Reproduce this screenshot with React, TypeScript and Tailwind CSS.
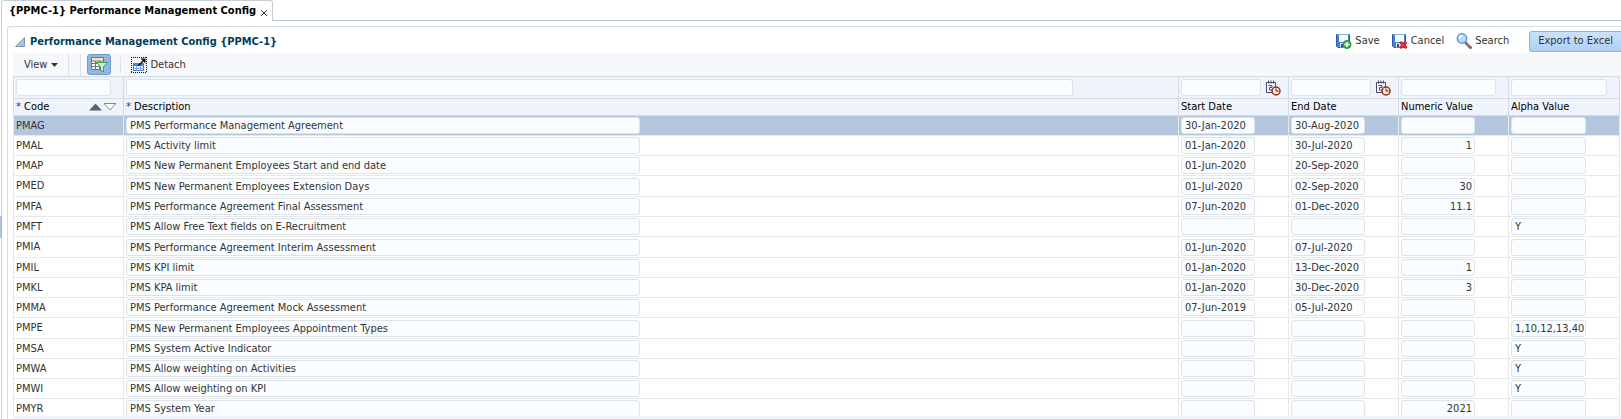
import { useState, type ReactNode } from 'react';

interface ConfigRow {
  code:        string;
  description: string;
  start?:      string;
  end?:        string;
  numeric?:    string;
  alpha?:      string;
}

const ROWS: ConfigRow[] = [
  { code: 'PMAG', description: 'PMS Performance Management Agreement', start: '30-Jan-2020', end: '30-Aug-2020' },
  { code: 'PMAL', description: 'PMS Activity limit', start: '01-Jan-2020', end: '30-Jul-2020', numeric: '1' },
  { code: 'PMAP', description: 'PMS New Permanent Employees Start and end date', start: '01-Jun-2020', end: '20-Sep-2020' },
  { code: 'PMED', description: 'PMS New Permanent Employees Extension Days', start: '01-Jul-2020', end: '02-Sep-2020', numeric: '30' },
  { code: 'PMFA', description: 'PMS Performance Agreement Final Assessment', start: '07-Jun-2020', end: '01-Dec-2020', numeric: '11.1' },
  { code: 'PMFT', description: 'PMS Allow Free Text fields on E-Recruitment', alpha: 'Y' },
  { code: 'PMIA', description: 'PMS Performance Agreement Interim Assessment', start: '01-Jun-2020', end: '07-Jul-2020' },
  { code: 'PMIL', description: 'PMS KPI limit', start: '01-Jan-2020', end: '13-Dec-2020', numeric: '1' },
  { code: 'PMKL', description: 'PMS KPA limit', start: '01-Jan-2020', end: '30-Dec-2020', numeric: '3' },
  { code: 'PMMA', description: 'PMS Performance Agreement Mock Assessment', start: '07-Jun-2019', end: '05-Jul-2020' },
  { code: 'PMPE', description: 'PMS New Permanent Employees Appointment Types', alpha: '1,10,12,13,40' },
  { code: 'PMSA', description: 'PMS System Active Indicator', alpha: 'Y' },
  { code: 'PMWA', description: 'PMS Allow weighting on Activities', alpha: 'Y' },
  { code: 'PMWI', description: 'PMS Allow weighting on KPI', alpha: 'Y' },
  { code: 'PMYR', description: 'PMS System Year', numeric: '2021' },
];

const FIELD = 'block rounded-[3px] border border-[#dde3e8] bg-[#fafdff] outline-none';

function DiskIcon({ children }: { children: ReactNode }) {
  return (
    <svg width="16" height="16" viewBox="0 0 16 16">
      <path d="M.5 1.500h13v13H2L.5 13z" fill="#4a7fd0" stroke="#2c5cae" />
      <path d="M3 2h9v7H3z" fill="#f6f9fe" />
      <path d="M1 1.500h12" stroke="#8fb2e6" />
      <path d="M4 10h7v4.500H4z" fill="#e6ecf6" />
      <path d="M5 11h2v3.500H5z" fill="#3a4f7c" />
      {children}
    </svg>
  );
}

function SaveIcon() {
  return (
    <DiskIcon>
      <circle cx="11" cy="11.500" r="4" fill="#3cba4c" stroke="#1b9436" />
      <path d="M11 9v5M8.500 11.500h5" stroke="#fff" strokeWidth="1.500" />
    </DiskIcon>
  );
}

function CancelIcon() {
  return (
    <DiskIcon>
      <path d="M8 9l6.500 6M14.500 9L8 15" stroke="#d3222c" strokeWidth="3" />
      <path d="M9 10l4.500 4M13.500 10L9 14" stroke="#ee6a6e" strokeDasharray="1 1" />
    </DiskIcon>
  );
}

function SearchIcon() {
  return (
    <svg width="16" height="16" viewBox="0 0 16 16">
      <path d="M10 10l4.500 4.500" stroke="#7c6560" strokeWidth="3" strokeLinecap="round" />
      <path d="M10.500 9.500l4 4" stroke="#c6a497" />
      <circle cx="6" cy="5.500" r="4.700" fill="#b9dcf9" stroke="#5b93d8" strokeWidth="1.500" />
      <path d="M3.500 5.500a3 3 0 0 1 3-3" fill="none" stroke="#fff" strokeWidth="1.500" />
    </svg>
  );
}

function FilterIcon() {
  return (
    <svg width="18" height="17" viewBox="0 0 18 17">
      <path d="M1.500 1.500h12v12h-12z" fill="#fff" stroke="#6a6f92" />
      <path d="M2 2h11v2.500H2z" fill="#f9ec9a" />
      <path d="M1 5h13M1 7.500h12M1 10.500h8M5.500 5v9M9.500 5v9" stroke="#6a6f92" />
      <path d="M6.500 6.500h11l-4 4.500v5L10.500 14v-3z" fill="#c9f2cf" stroke="#3c9d58" />
    </svg>
  );
}

function DetachIcon() {
  return (
    <svg width="16" height="16" viewBox="0 0 16 16">
      <path d="M0 .500h16M.500 0v16M15.500 0v16M0 15.500h16" stroke="#111" strokeDasharray="1 1" />
      <path d="M2.500 6.500h10v7h-10z" fill="#fff" stroke="#3c6cc4" />
      <path d="M2 6h11v3H2z" fill="#4d84db" />
      <path d="M2 11.500h11M5.500 9v5M9.500 9v5" stroke="#7ba6e8" />
      <path d="M7 9L13 3" stroke="#111" strokeWidth="1.500" />
      <path d="M9.500 1.500h5v5z" fill="#111" />
    </svg>
  );
}

function CalendarIcon() {
  return (
    <svg width="16" height="16" viewBox="0 0 16 16">
      <path d="M1.500 2.500h9v10h-9z" fill="#f6f7fc" stroke="#45496e" />
      <path d="M3.500 .500v3M6 .500v3M8.500 .500v3" stroke="#45496e" />
      <path d="M3.500 5.500h3.500v2H4.500v2.500H7" fill="none" stroke="#45496e" />
      <circle cx="11" cy="11" r="4" fill="#fce6c8" stroke="#8e2f22" strokeWidth="1.500" />
      <path d="M11 8.500V11h2.500" fill="none" stroke="#4a2a20" />
    </svg>
  );
}

function SortArrows() {
  return (
    <svg width="28" height="8" viewBox="0 0 28 8">
      <path d="M0 7.500L6.500 0.500L13 7.500z" fill="#51657a" />
      <path d="M15 .5h12L21 7z" fill="#fff" stroke="#7e8c9a" />
    </svg>
  );
}

function ToolButton({ icon, label }: { icon: ReactNode; label: string }) {
  return (
    <button className="flex items-center gap-[3px]">
      {icon}
      {label}
    </button>
  );
}

function Separator() {
  return <span className="h-[22px] w-px bg-[#dce2ea]" />;
}

function FilterInput({ label, className }: { label: string; className: string }) {
  return <input aria-label={`Filter ${label}`} className={`${FIELD} h-[17px] ${className}`} />;
}

function CellInput({ label, value = '', className }: { label: string; value?: string; className: string }) {
  return <input aria-label={label} defaultValue={value} className={`${FIELD} ml-0.5 h-[17px] pl-[3px] ${className}`} />;
}

export default function App() {
  const [selected, setSelected] = useState('PMAG');

  return (
    <div className="relative flex h-screen flex-col overflow-hidden bg-white font-['DejaVu_Sans_Condensed','DejaVu_Sans',sans-serif] text-[11px] leading-4 text-[#333]">
      {/* Tab strip */}
      <div className="flex h-[21px] shrink-0">
        <div className="ml-px flex items-center gap-1 rounded-t-[3px] border border-b-0 border-[#c3ced9] pl-[7px] pr-1 font-bold text-black">
          {'{PPMC-1} Performance Management Config'}
          <button aria-label="Close tab" className="pt-1">
            <svg width="8" height="8" viewBox="0 0 8 8"><path d="M1 1l6 6M7 1L1 7" stroke="#333" /></svg>
          </button>
        </div>
        <div className="grow border-b border-[#b9c6d6]" />
      </div>

      {/* Splitter handle */}
      <div className="absolute left-0 top-[216px] h-[22px] w-0.5 bg-[#a9c3e6]" />

      <div className="ml-px flex min-h-0 grow flex-col border-l border-[#c9d4e0] pl-[5px] pt-[5px]">
        <div className="flex min-h-0 grow flex-col rounded-tl-[3px] border-l border-t border-[#d3dfe8]">
          {/* Panel header */}
          <div className="flex h-[26px] shrink-0 items-center justify-between pl-[7px]">
            <h1 className="flex items-center gap-[5px] pt-[3px] font-bold text-[#003d5b]">
              <svg width="10" height="10" viewBox="0 0 10 10"><path d="M9.500.5v9H.5z" fill="#a9c3de" stroke="#7d9cbc" /></svg>
              {'Performance Management Config {PPMC-1}'}
            </h1>
            <div className="flex items-center gap-3 pt-0.5">
              <ToolButton icon={<SaveIcon />} label="Save" />
              <ToolButton icon={<CancelIcon />} label="Cancel" />
              <ToolButton icon={<SearchIcon />} label="Search" />
              <button className="ml-2 h-[21px] rounded-l-[3px] border border-r-0 border-[#8fb4dc] bg-linear-to-b from-[#cbe1f9] to-[#aed0f4] px-2">
                Export to Excel
              </button>
            </div>
          </div>

          {/* Table toolbar */}
          <div className="ml-[5px] flex h-[23px] shrink-0 items-center bg-[#f7f8fc] pl-[11px]">
            <button className="mr-2.5 flex items-center gap-1">
              View
              <svg width="7" height="4" viewBox="0 0 7 4"><path d="M0 0h7L3.500 4z" fill="#333" /></svg>
            </button>
            <Separator />
            <span className="w-[11px]" />
            <Separator />
            <button aria-label="Query by example" className="ml-1.5 mr-[5px] flex h-[21px] w-6 items-center justify-center rounded-[3px] border border-[#6f9bcc] bg-[#92b7e0]">
              <FilterIcon />
            </button>
            <span className="ml-1 mr-2.5 h-4 w-px bg-[#dce2ea]" />
            <ToolButton icon={<DetachIcon />} label="Detach" />
          </div>

          <div className="ml-[5px] mr-px min-h-0 grow overflow-hidden">
            <table className="w-full table-fixed border-collapse">
              <colgroup>
                <col className="w-[110px]" />
                <col />
                <col className="w-[110px]" />
                <col className="w-[110px]" />
                <col className="w-[110px]" />
                <col className="w-[111px]" />
              </colgroup>
              <thead className="bg-[#eff3fb] text-left text-black [&_td]:border [&_td]:border-[#d3dbe4] [&_td]:p-0 [&_td]:pl-0.5 [&_th]:border [&_th]:border-[#d3dbe4] [&_th]:p-0 [&_th]:pl-0.5 [&_th]:font-normal">
                <tr className="h-[22px]">
                  <td><FilterInput label="Code" className="w-[95px]" /></td>
                  <td><FilterInput label="Description" className="w-[90%]" /></td>
                  {['Start Date', 'End Date'].map(label => (
                    <td key={label}>
                      <div className="flex items-center gap-1">
                        <FilterInput label={label} className="w-20" />
                        <button aria-label={`Pick ${label}`}><CalendarIcon /></button>
                      </div>
                    </td>
                  ))}
                  <td><FilterInput label="Numeric Value" className="w-[95px]" /></td>
                  <td><FilterInput label="Alpha Value" className="w-24" /></td>
                </tr>
                <tr className="h-[17px]">
                  <th>
                    <div className="flex items-center justify-between pr-1.5">
                      <span><span className="text-[#003d9b]">*</span> Code</span>
                      <SortArrows />
                    </div>
                  </th>
                  <th><span className="text-[#003d9b]">*</span> Description</th>
                  <th>Start Date</th>
                  <th>End Date</th>
                  <th>Numeric Value</th>
                  <th>Alpha Value</th>
                </tr>
              </thead>
              <tbody className="[&_td]:border [&_td]:border-[#e6e8ea] [&_td]:p-0">
                {ROWS.map((row, i) => (
                  <tr
                    key={row.code}
                    onClick={() => setSelected(row.code)}
                    className={`${[3, 6, 10].includes(i) ? 'h-[21px]' : 'h-5'} ${row.code === selected ? 'bg-[#b3c6dd]' : 'bg-white'}`}
                  >
                    <td><span className="pl-0.5">{row.code}</span></td>
                    <td><CellInput label={`${row.code} description`} value={row.description} className="w-[514px]" /></td>
                    <td><CellInput label={`${row.code} start date`} value={row.start} className="w-[74px]" /></td>
                    <td><CellInput label={`${row.code} end date`} value={row.end} className="w-[74px]" /></td>
                    <td><CellInput label={`${row.code} numeric value`} value={row.numeric} className="w-[74px] pr-0.5 text-right" /></td>
                    <td><CellInput label={`${row.code} alpha value`} value={row.alpha} className="w-[75px]" /></td>
                  </tr>
                ))}
              </tbody>
            </table>
          </div>

          {/* Scroll gutter */}
          <div className="ml-[5px] h-[3px] shrink-0 bg-[#eff3fb]" />
        </div>
      </div>
    </div>
  );
}
